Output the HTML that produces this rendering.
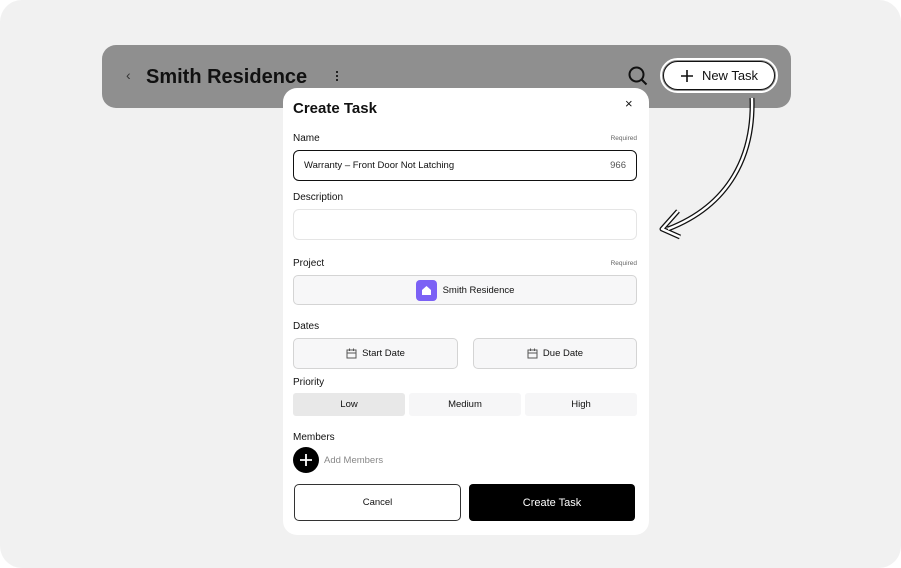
<!DOCTYPE html>
<html><head><style>
*{box-sizing:border-box;margin:0;padding:0}
body{width:901px;height:568px;background:#fff;font-family:"Liberation Sans",sans-serif;position:relative;overflow:hidden}
.bg{position:absolute;left:0;top:0;width:901px;height:568px;background:#f1f1f1;border-radius:22px}
.bar{position:absolute;left:102px;top:45px;width:689px;height:63px;background:#8f8f8f;border-radius:14px}
.abs{position:absolute}
.modal{position:absolute;left:283px;top:88px;width:366px;height:447px;background:#fff;border-radius:14px}
.lbl{position:absolute;left:10px;font-size:10px;color:#111}
.req{position:absolute;right:12px;font-size:6.5px;color:#666}
.box{position:absolute;border:1px solid #d4d4d4;border-radius:5px;background:#f7f7f8}
.c{display:flex;align-items:center;justify-content:center;font-size:9.5px;color:#111}
</style></head><body>
<div class="bg"></div>
<div class="bar">
 <div class="abs" style="left:24px;top:22px;font-size:14px;color:#333">‹</div>
 <div class="abs" style="left:44px;top:21px;font-size:20px;font-weight:bold;color:#111">Smith Residence</div>
 <div class="abs" style="left:234px;top:26px;width:3px">
  <div style="width:2px;height:2px;background:#222;margin-bottom:2px"></div><div style="width:2px;height:2px;background:#222;margin-bottom:2px"></div><div style="width:2px;height:2px;background:#222"></div></div>
 <svg class="abs" style="left:525px;top:20px" width="22" height="22"><circle cx="9.5" cy="9.5" r="7" fill="none" stroke="#111" stroke-width="2"/><line x1="14.5" y1="14.5" x2="19.5" y2="19.5" stroke="#111" stroke-width="2"/></svg>
 <div class="abs" style="left:558px;top:13px;width:118px;height:35px;border:2px solid #fff;border-radius:18px"></div>
 <div class="abs c" style="left:561px;top:16px;width:112px;height:29px;background:#fff;border:1.5px solid #111;border-radius:15px;font-size:13px">
  <svg width="14" height="14" style="margin-right:8px"><path d="M7 1v12M1 7h12" stroke="#111" stroke-width="1.6"/></svg>New Task</div>
</div>
<svg class="abs" style="left:650px;top:95px" width="120" height="150">
 <path d="M102 3 C104 60 80 110 18 134 M28 116 L12 134 L30 142" fill="none" stroke="#111" stroke-width="5" stroke-linejoin="round"/>
 <path d="M102 3 C104 60 80 110 18 134 M28 116 L12 134 L30 142" fill="none" stroke="#fff" stroke-width="2.4" stroke-linejoin="round"/>
</svg>
<div class="modal">
 <div class="abs" style="left:10px;top:12px;font-size:15px;font-weight:bold;color:#111">Create Task</div>
 <div class="abs" style="left:342px;top:8px;font-size:13px;color:#111">×</div>
 <div class="lbl" style="top:45px">Name</div><div class="req" style="top:47px">Required</div>
 <div class="abs" style="left:10px;top:62px;width:344px;height:31px;border:1.5px solid #111;border-radius:6px;font-size:9.5px;color:#111;padding:9px 10px">Warranty – Front Door Not Latching<span style="float:right;color:#555">966</span></div>
 <div class="lbl" style="top:104px">Description</div>
 <div class="abs" style="left:10px;top:121px;width:344px;height:31px;border:1px solid #e5e5e5;border-radius:6px"></div>
 <div class="lbl" style="top:170px">Project</div><div class="req" style="top:172px">Required</div>
 <div class="box c" style="left:10px;top:187px;width:344px;height:30px">
  <div style="width:21px;height:21px;background:#7b61f5;border-radius:4px;margin-right:6px;display:flex;align-items:center;justify-content:center"><svg width="11" height="11"><path d="M1 5L5.5 1L10 5V10H1Z" fill="#fff"/></svg></div>Smith Residence</div>
 <div class="lbl" style="top:233px">Dates</div>
 <div class="box c" style="left:10px;top:250px;width:165px;height:31px"><svg width="11" height="11" style="margin-right:5px"><rect x="1" y="2" width="9" height="8" fill="none" stroke="#555"/><path d="M1 5H10M3.5 0.5V3M7.5 0.5V3" stroke="#555"/></svg>Start Date</div>
 <div class="box c" style="left:190px;top:250px;width:164px;height:31px"><svg width="11" height="11" style="margin-right:5px"><rect x="1" y="2" width="9" height="8" fill="none" stroke="#555"/><path d="M1 5H10M3.5 0.5V3M7.5 0.5V3" stroke="#555"/></svg>Due Date</div>
 <div class="lbl" style="top:289px">Priority</div>
 <div class="abs c" style="left:10px;top:305px;width:112px;height:23px;background:#e8e8e8;border-radius:3px">Low</div>
 <div class="abs c" style="left:126px;top:305px;width:112px;height:23px;background:#f6f6f7;border-radius:3px">Medium</div>
 <div class="abs c" style="left:242px;top:305px;width:112px;height:23px;background:#f6f6f7;border-radius:3px">High</div>
 <div class="lbl" style="top:344px">Members</div>
 <div class="abs" style="left:10px;top:359px;width:26px;height:26px;border-radius:50%;background:#000;display:flex;align-items:center;justify-content:center"><svg width="14" height="14"><path d="M7 1v12M1 7h12" stroke="#fff" stroke-width="1.8"/></svg></div>
 <div class="abs" style="left:41px;top:367px;font-size:9.5px;color:#888">Add Members</div>
 <div class="abs c" style="left:11px;top:396px;width:167px;height:37px;border:1px solid #333;border-radius:5px">Cancel</div>
 <div class="abs c" style="left:186px;top:396px;width:166px;height:37px;background:#000;border-radius:4px;color:#fff;font-size:11px">Create Task</div>
</div>
</body></html>
